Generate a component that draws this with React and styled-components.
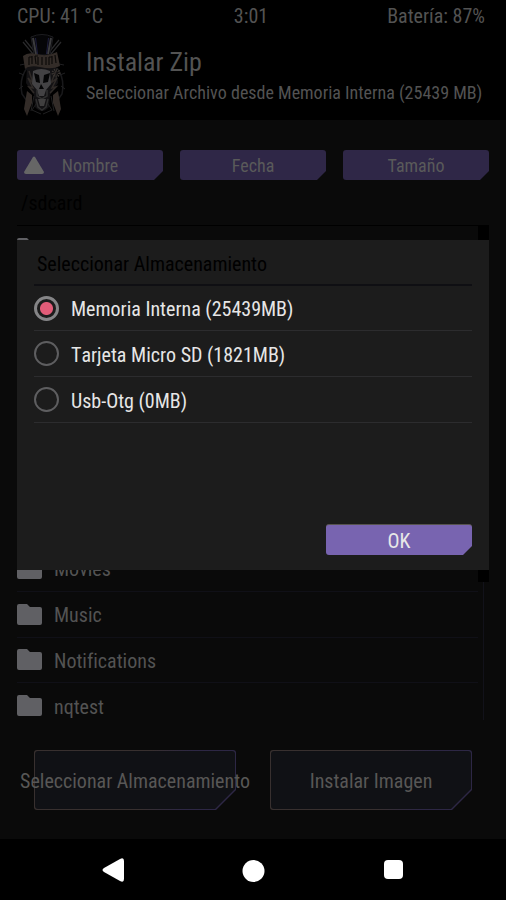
import React, { useState } from "react";
import styled, { createGlobalStyle } from "styled-components";

const GlobalStyle = createGlobalStyle`
  * { box-sizing: border-box; }
  body {
    margin: 0;
    background: #0a0a0a;
    font-family: "Roboto Condensed", "Liberation Sans Narrow", Roboto, sans-serif;
    font-kerning: none;
    font-variant-ligatures: none;
  }
  button, input { font-family: inherit; margin: 0; }
`;

const Screen = styled.div`
  position: relative;
  display: flex;
  flex-direction: column;
  min-height: 100vh;
  color: #535353;
`;

const TopBar = styled.header`
  height: 120px;
  background: #000;
`;

const StatusBar = styled.div`
  display: grid;
  grid-template-columns: 1fr auto 1fr;
  padding: 0 21px 0 17px;
  font-size: 20px;
  line-height: 32px;
  white-space: nowrap;
  & > :last-child { text-align: right; }
`;

const TitleRow = styled.div`
  display: flex;
  gap: 21px;
  padding: 2px 0 0 19px;
`;

const Logo = styled.svg`
  flex: none;
  width: 46px;
  height: 82px;
`;

const Title = styled.h1`
  margin: 12px 0 0;
  font-size: 26px;
  line-height: 32px;
  font-weight: 400;
`;

const Subtitle = styled.p`
  margin: 0;
  font-size: 18px;
  line-height: 30px;
  white-space: nowrap;
`;

const Main = styled.main`
  flex: 1;
  display: flex;
  flex-direction: column;
  padding: 30px 17px 29px;
`;

const SortBar = styled.div`
  display: grid;
  grid-template-columns: repeat(3, 1fr);
  gap: 17px;
`;

const NotchedButton = styled.button`
  display: flex;
  align-items: center;
  justify-content: center;
  position: relative;
  height: 30px;
  padding: 1px 0 0;
  border: 0;
  border-radius: 3px;
  background: ${(p) => (p.$bright ? "#7864b0" : "#2f2747")};
  color: ${(p) => (p.$bright ? "#e8e8e8" : "#5a5a5a")};
  font-size: ${(p) => (p.$bright ? 20 : 18)}px;
  clip-path: polygon(0 0, 100% 0, 100% calc(100% - 9px), calc(100% - 9px) 100%, 0 100%);
`;

const SortArrow = styled.svg`
  position: absolute;
  left: 7px;
  top: 6px;
  width: 20px;
  height: 18px;
`;

const Path = styled.div`
  padding: 0 4px;
  height: 46px;
  border-bottom: 1px solid #000;
  color: #000;
  font-size: 20px;
  line-height: 46px;
`;

const Browser = styled.div`
  display: flex;
  height: 494px;
`;

const FolderList = styled.ul`
  flex: 1;
  display: grid;
  grid-template-rows: repeat(11, 1fr);
  height: 503px;
  margin: 0;
  padding: 0;
  list-style: none;
`;

const Folder = styled.li`
  display: flex;
  align-items: center;
  gap: 12px;
  border-bottom: 1px solid ${(p) => (p.$last ? "transparent" : "#101017")};
  font-size: 20px;
  svg { flex: none; width: 25px; height: 21px; }
  span { padding-top: 2px; }
`;

const ScrollTrack = styled.div`
  width: 11px;
  background: linear-gradient(#12121a, #12121a) 5px 0 / 1px 100% no-repeat;
`;

const ScrollThumb = styled.div`
  height: 356px;
  background: #000;
`;

const Actions = styled.div`
  display: grid;
  grid-template-columns: repeat(2, minmax(0, 1fr));
  gap: 34px;
  margin-top: auto;
  padding: 0 17px;
`;

const OutlineButton = styled.button`
  position: relative;
  z-index: 0;
  display: flex;
  align-items: center;
  justify-content: center;
  height: 60px;
  padding: 2px 0 0;
  border: 0;
  background: none;
  color: #585756;
  font-size: 20px;
  white-space: nowrap;
  &::before, &::after {
    content: "";
    position: absolute;
    z-index: -1;
    border-radius: 3px;
    clip-path: polygon(0 0, 100% 0, 100% calc(100% - 20px), calc(100% - 20px) 100%, 0 100%);
  }
  &::before { inset: 0; background: linear-gradient(100deg, #38302f 0 55%, #2d2745 75%); }
  &::after { inset: 1px; background: #101115; }
`;

const Dialog = styled.section`
  position: absolute;
  top: 240px;
  left: 17px;
  right: 17px;
  display: flex;
  flex-direction: column;
  height: 330px;
  padding: 0 17px 15px;
  background: #1c1c1c;
`;

const DialogTitle = styled.h2`
  margin: 0;
  padding: 2px 3px 0;
  height: 46px;
  border-bottom: 2px solid #0f0f13;
  color: #000;
  font-size: 20px;
  line-height: 44px;
  font-weight: 400;
`;

const Option = styled.label`
  display: flex;
  align-items: center;
  gap: 12px;
  height: ${(p) => (p.$first ? 45 : 46)}px;
  border-bottom: 1px solid #2c2c2e;
  color: #e6e6e6;
  font-size: 20px;
  span { padding-top: 2px; }
`;

const Radio = styled.input.attrs({ type: "radio" })`
  appearance: none;
  flex: none;
  width: 25px;
  height: 25px;
  border: 2px solid #5e5e60;
  border-radius: 50%;
  &:checked {
    border: 3px solid #858587;
    background: radial-gradient(circle, #e25c78 0 6px, #1c1c1c 7px);
  }
`;

const ConfirmRow = styled.div`
  display: grid;
  grid-template-columns: repeat(3, 1fr);
  margin-top: auto;
  ${NotchedButton} {
    grid-column: 3;
    height: 31px;
    border-top: 1px solid #57534f;
  }
`;

const NavBar = styled.nav`
  display: flex;
  justify-content: center;
  align-items: center;
  gap: 117px;
  height: 61px;
  background: #000;
`;

const NavButton = styled.button`
  display: flex;
  padding: 0;
  border: 0;
  background: none;
  svg { width: 23px; height: 24px; fill: #fff; }
`;

const SkullLogo = () => (
  <Logo viewBox="0 0 46 82" fill="none" aria-hidden="true">
    <path d="M4 8l10 12M42 8L32 20M6 6l9 11M40 6l-9 11" stroke="#2a2a2c" strokeWidth="1.2" />
    <path d="M12 3q11-5 22 0l-3 18H15z" fill="#050507" stroke="#1d1d20" />
    <path d="M14 4l3 16M32 4l-3 16" stroke="#3c3c3e" strokeWidth="2" />
    <path d="M16.500 4l2 16M29.500 4l-2 16" stroke="#1e1e3e" strokeWidth="1" />
    <path d="M8 34q-8 10-5 26l5 7M38 34q8 10 5 26l-5 7" stroke="#19191b" strokeWidth="1.500" />
    <path d="M6 30l-5 1M5 41l-5-2M4 52l-4 3M40 30l5 1M41 41l5-2M42 52l4 3" stroke="#202022" />
    <path d="M8 34q15-10 30 0l1 15-8 12-1 12q-7 8-14 0l-1-12-8-12z" fill="#131214" />
    <path d="M10 37l4 12-5-5 5 10-4-1 5 6M37 37l-5 12 6-5-5 10 4-1-6 6" stroke="#2f2a27" strokeWidth="1.500" />
    <path d="M14 37q8-4 17 0l1 13-5 6-2 6h-5l-2-6-5-6z" fill="#434244" />
    <path d="M15 39l5 2 1 8-4-1zM31 39l-6 2-1 8 5-1zM22 50l-2 5h5z" fill="#050506" />
    <path d="M18 56v6l5 3 5-3v-6M17 65l2 8 4 3 4-3 2-8" stroke="#2f2f2f" strokeWidth="1.500" />
    <path d="M19 65h8l-2 7h-4z" fill="#403f3f" />
    <path d="M8 57l5 4v8l-2 5-3 8-3-7zM39 57l-5 4v8l2 5 3 8 3-7z" fill="#332c28" />
    <path d="M15 62l-3 15M17 70l-4 6 9 4M32 62l3 15M29 70l4 6-9 4" stroke="#202021" />
    <path d="M4 22q5-4 13-2 12 3 21-2l3 14q-8 4-20 1-10-2-15 2z" fill="#332c28" />
    <path d="M10 23v8M13 22v8M16 22l1 8M19 23v8M23 23v8M27 23v8M30 23v8M33 22v8M36 21l1 8M10 23h3M16 22h3M30 23h3" stroke="#0c0a09" strokeWidth="1.200" />
    <circle cx="37" cy="39" r="3" stroke="#3b3632" strokeDasharray="1 1" strokeWidth="3" />
  </Logo>
);

const FolderIcon = () => (
  <svg viewBox="0 0 25 21" aria-hidden="true">
    <path d="M2 0h8l3 3h10q2 0 2 2v14q0 2-2 2H2q-2 0-2-2V2q0-2 2-2z" fill="#606064" />
  </svg>
);

// Entries behind the dialog have no visible name.
const folders = ["", "", "", "", "", "", "", "Movies", "Music", "Notifications", "nqtest"];
const storages = ["Memoria Interna (25439MB)", "Tarjeta Micro SD (1821MB)", "Usb-Otg (0MB)"];

export default function App() {
  const [selected, setSelected] = useState(0);
  return (
    <Screen>
      <GlobalStyle />
      <TopBar>
        <StatusBar>
          <span>CPU: 41 °C</span>
          <span>3:01</span>
          <span>Batería: 87%</span>
        </StatusBar>
        <TitleRow>
          <SkullLogo />
          <div>
            <Title>Instalar Zip</Title>
            <Subtitle>Seleccionar Archivo desde Memoria Interna (25439 MB)</Subtitle>
          </div>
        </TitleRow>
      </TopBar>
      <Main>
        <SortBar>
          <NotchedButton>
            <SortArrow viewBox="0 0 20 18" aria-hidden="true">
              <path d="M9 1q1-1 2 0l9 15q0 2-2 2H2q-2 0-2-2z" fill="#666" />
            </SortArrow>
            Nombre
          </NotchedButton>
          <NotchedButton>Fecha</NotchedButton>
          <NotchedButton>Tamaño</NotchedButton>
        </SortBar>
        <Path>/sdcard</Path>
        <Browser>
          <FolderList>
            {folders.map((name, i) => (
              <Folder key={i} $last={i === folders.length - 1}>
                <FolderIcon />
                <span>{name}</span>
              </Folder>
            ))}
          </FolderList>
          <ScrollTrack>
            <ScrollThumb />
          </ScrollTrack>
        </Browser>
        <Actions>
          <OutlineButton>Seleccionar Almacenamiento</OutlineButton>
          <OutlineButton>Instalar Imagen</OutlineButton>
        </Actions>
      </Main>
      <NavBar>
        <NavButton aria-label="Atrás">
          <svg viewBox="0 0 23 24">
            <path d="M2 10L18 1q4-2 4 2v18q0 4-4 2L2 14q-3-2 0-4z" />
          </svg>
        </NavButton>
        <NavButton aria-label="Inicio">
          <svg viewBox="0 0 23 24">
            <circle cx="11.500" cy="13" r="11" />
          </svg>
        </NavButton>
        <NavButton aria-label="Recientes">
          <svg viewBox="0 0 23 24">
            <rect x="2" y="2" width="19" height="19" rx="4" />
          </svg>
        </NavButton>
      </NavBar>
      <Dialog role="dialog" aria-labelledby="storage-title">
        <DialogTitle id="storage-title">Seleccionar Almacenamiento</DialogTitle>
        {storages.map((label, i) => (
          <Option key={label} $first={i === 0}>
            <Radio name="storage" checked={selected === i} onChange={() => setSelected(i)} />
            <span>{label}</span>
          </Option>
        ))}
        <ConfirmRow>
          <NotchedButton $bright>OK</NotchedButton>
        </ConfirmRow>
      </Dialog>
    </Screen>
  );
}
